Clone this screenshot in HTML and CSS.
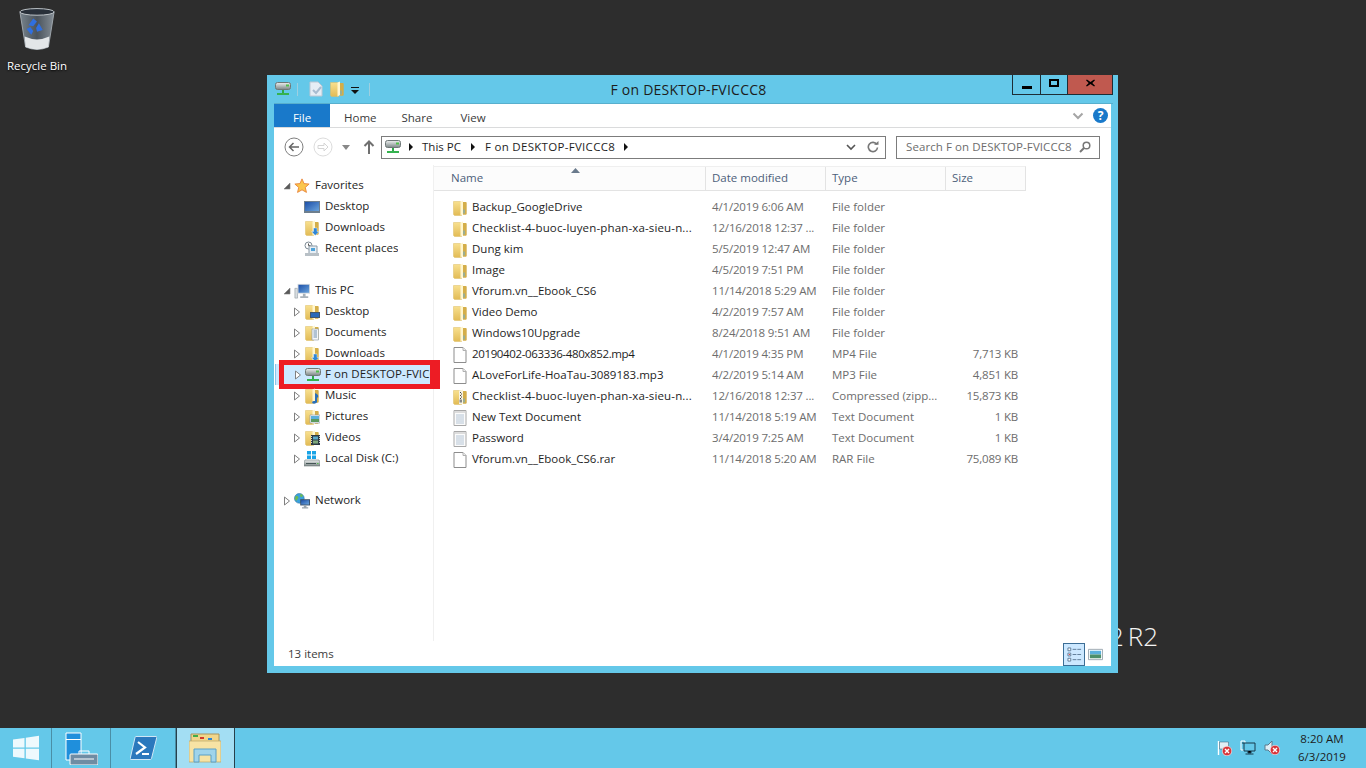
FILE: index.html
```html
<!DOCTYPE html>
<html lang="en">
<head>
<meta charset="utf-8">
<title>F on DESKTOP-FVICCC8</title>
<link rel="stylesheet" href="styles.css">
</head>
<body>
<svg class="sprite" aria-hidden="true">
  <defs>
    <linearGradient id="g-folder" x1="0" y1="0" x2="0" y2="1"><stop offset="0" stop-color="#f8e08f"/><stop offset="1" stop-color="#e2bb55"/></linearGradient>
    <linearGradient id="g-drive" x1="0" y1="0" x2="0" y2="1"><stop offset="0" stop-color="#eef0f0"/><stop offset=".5" stop-color="#b5bcbc"/><stop offset="1" stop-color="#7d8787"/></linearGradient>
    <linearGradient id="g-screen" x1="0" y1="0" x2="1" y2="1"><stop offset="0" stop-color="#1d4fa8"/><stop offset="1" stop-color="#6aa4dc"/></linearGradient>
    <linearGradient id="g-bin" x1="0" y1="0" x2="1" y2="0"><stop offset="0" stop-color="#77838c"/><stop offset=".5" stop-color="#4a535c"/><stop offset="1" stop-color="#848d95"/></linearGradient>
    <symbol id="i-folder" viewBox="0 0 16 16">
      <path d="M1.500 1.500h7l1 1v13h-7l-1-1z" fill="url(#g-folder)" stroke="#dcbc62" stroke-width=".5"/>
      <path d="M8.500 1.500l2.500-1v13.500l-2.500 1.500z" fill="#fff6cf"/>
      <path d="M11 2h3l.7.7V14l-.7.7h-3z" fill="#d4ae49"/>
      <path d="M11.500 9.500h1v4h-1z" fill="#62aede"/>
    </symbol>
    <symbol id="i-file" viewBox="0 0 16 16">
      <path d="M2 .5h9l3 3v12H2z" fill="#fff" stroke="#8d8d8d"/>
      <path d="M11 .5v3h3" fill="#eee" stroke="#b0b0b0"/>
    </symbol>
    <symbol id="i-text" viewBox="0 0 16 16">
      <path d="M2 .5h12v15H2z" fill="#fbfbfb" stroke="#a8a8a8"/>
      <path d="M3 1h10v2H3z" fill="#dcdcdc"/>
      <path d="M4 5h8M4 7h8M4 9h8M4 11h8M4 13h8" stroke="#b4c4d4"/>
    </symbol>
    <symbol id="i-zip" viewBox="0 0 16 16">
      <use href="#i-folder"/>
      <path d="M7 1.500h3.500v13.500H7z" fill="#f7f3e3"/>
      <path d="M8 3h1v1H8zM9 4.500h1v1H9zM8 6h1v1H8zM9 7.500h1v1H9zM8 9h1v1H8z" fill="#444"/>
      <path d="M7.500 10.500h2.500v3H7.500z" fill="#888"/>
    </symbol>
    <symbol id="i-drive" viewBox="0 0 16 16">
      <rect x=".5" y="1.500" width="15" height="7" rx="2" fill="url(#g-drive)" stroke="#6f7878"/>
      <path d="M11 3.500h3v2h-3z" fill="#4fbf4a"/>
      <path d="M7 9h2v3H7z" fill="#2fa84a"/>
      <path d="M2 12h12v2H2z" fill="#35b24f"/>
    </symbol>
    <symbol id="i-star" viewBox="0 0 18 18">
      <path d="M9 1l2.300 5.300 5.700.5-4.300 3.800 1.300 5.600L9 13.300l-5 2.900 1.300-5.600L1 6.800l5.700-.5z" fill="#fbc64c" stroke="#e7833a"/>
    </symbol>
    <symbol id="i-desktop" viewBox="0 0 16 16">
      <path d="M0 2h16v12H0z" fill="#6e7f8e"/>
      <path d="M1 3h14v9H1z" fill="url(#g-screen)"/>
    </symbol>
    <symbol id="i-down" viewBox="0 0 16 16">
      <use href="#i-folder"/>
      <path d="M9.500 8h3.500v3.500H15L11.200 15.500 7.500 11.500h2z" fill="#2f86d6" stroke="#fff" stroke-width=".4"/>
    </symbol>
    <symbol id="i-recent" viewBox="0 0 16 16">
      <circle cx="4.500" cy="4.500" r="3.500" fill="#fff" stroke="#7d8a94"/>
      <path d="M4.500 2.500v2h2" fill="none" stroke="#555"/>
      <path d="M5 5h8v8H5z" fill="#e6eef5" stroke="#8c9aa6"/>
      <path d="M7 7h4v3H7z" fill="#4fa3d9"/>
      <path d="M1 12h14v3H1z" fill="#b8c0c6"/>
    </symbol>
    <symbol id="i-pc" viewBox="0 0 18 18">
      <path d="M1 6h3v11H1z" fill="#d8dde0" stroke="#8a9298" stroke-width=".6"/>
      <path d="M4 1h14v11H4z" fill="#d4dadf"/>
      <path d="M5 2h12v9H5z" fill="url(#g-screen)"/>
      <path d="M10 12h3v3h-3zM7 15h9v2H7z" fill="#a9b2b9"/>
    </symbol>
    <symbol id="i-fdesk" viewBox="0 0 16 16">
      <use href="#i-folder"/>
      <path d="M6 8h10v6H6z" fill="#44586a"/>
      <path d="M7 9h8v4H7z" fill="#2a69b8"/>
    </symbol>
    <symbol id="i-fdocs" viewBox="0 0 16 16">
      <use href="#i-folder"/>
      <path d="M8 4h6.500v11H8z" fill="#f4f6f8" stroke="#8c98a4" stroke-width=".6"/>
      <path d="M9.500 6h3.500M9.500 8h3.500M9.500 10h3.500M9.500 12h3.500" stroke="#6f8faf"/>
    </symbol>
    <symbol id="i-fmusic" viewBox="0 0 16 16">
      <use href="#i-folder"/>
      <path d="M11 5c2 1 4 2 3 5l-1-1v5c0 1-2 2-4 1.500-1.500-.5-1-2.500 1-2.500h1V5z" fill="#2a6fb8"/>
    </symbol>
    <symbol id="i-fpics" viewBox="0 0 16 16">
      <use href="#i-folder"/>
      <path d="M6 6h10v8H6z" fill="#f0f3f5" stroke="#8c98a4" stroke-width=".6"/>
      <path d="M7 7h8v3H7z" fill="#5bb0dc"/>
      <path d="M7 10h8v3H7z" fill="#5a9a5e"/>
    </symbol>
    <symbol id="i-fvideo" viewBox="0 0 16 16">
      <use href="#i-folder"/>
      <path d="M7 5h9v10H7z" fill="#2d3a44"/>
      <path d="M9 6.500h5v3H9z" fill="#5aa9c9"/>
      <path d="M9 10.500h5v3H9z" fill="#7ea87a"/>
      <path d="M7.500 6v8M15.500 6v8" stroke="#cfd6da" stroke-dasharray="1 1"/>
    </symbol>
    <symbol id="i-disk" viewBox="0 0 16 16">
      <path d="M3 0h4v3.500H3zM8 0h4v3.500H8zM3 4.500h4V8H3zM8 4.500h4V8H8z" fill="#19a3e6"/>
      <path d="M1 9h14l1 2v4H0v-4z" fill="url(#g-drive)" stroke="#6f7878" stroke-width=".6"/>
      <path d="M2 12h10v1H2z" fill="#455"/>
      <path d="M13 12h1.500v1H13z" fill="#4fbf4a"/>
    </symbol>
    <symbol id="i-net" viewBox="0 0 18 18">
      <circle cx="6" cy="6" r="5.500" fill="#3aa0dc" stroke="#2a6d9e" stroke-width=".6"/>
      <path d="M2 3c2 0 3 1 3 2S3 7 3 9L1 7zM7 1c2 0 3 1 3 2S8 5 7 4z" fill="#6dbb52"/>
      <path d="M7 7h11v7H7z" fill="#3a4f66"/>
      <path d="M8 8h9v5H8z" fill="url(#g-screen)"/>
      <path d="M11 14h3v2h-3zM9 16h7v1.500H9z" fill="#9aa4ac"/>
    </symbol>
    <symbol id="i-open" viewBox="0 0 8 10"><path d="M1.500 1l5 4-5 4z" fill="#fff" stroke="#808080"/></symbol>
    <symbol id="i-shut" viewBox="0 0 8 8"><path d="M7 1v6H1z" fill="#595959" stroke="#808080" stroke-width=".6"/></symbol>
    <symbol id="i-crumb" viewBox="0 0 6 10"><path d="M1 1l4 4-4 4z" fill="#111"/></symbol>
    <symbol id="i-x" viewBox="0 0 10 10"><circle cx="5" cy="5" r="4.800" fill="#d8353a" stroke="#fff" stroke-width=".6"/><path d="M3 3l4 4M7 3l-4 4" stroke="#fff" stroke-width="1.400"/></symbol>
  </defs>
</svg>

<main class="desktop">
  <div class="watermark">Windows Server 2012 R2</div>

  <div class="desk-icon">
    <svg class="bin" viewBox="0 0 40 46">
      <path d="M2 5l6 37q12 5 24 0l6-37z" fill="url(#g-bin)" stroke="#a0a8ae"/>
      <path d="M7 31q13 6 26 0l-1 11q-12 5-24 0z" fill="#e3e6e8"/>
      <path d="M11 19l5-7 4 3-4 5zM22 17l4 7-6 2-1-4zM9 23l5 6 2-4-3-4z" fill="#2f6fe0"/>
      <ellipse cx="20" cy="5" rx="18" ry="3.500" fill="#28303a" stroke="#c3c9ce"/>
    </svg>
    <span class="desk-label">Recycle Bin</span>
  </div>

  <section class="window">
    <header class="titlebar">
      <div class="quick">
        <svg class="ic16"><use href="#i-drive"/></svg>
        <span class="qsep"></span>
        <svg class="ic16 qdoc" viewBox="0 0 16 16"><path d="M2 1h8l4 4v10H2z" fill="#e6edf5" stroke="#bcc7d3"/><path d="M5 9l3 3 5-6" fill="none" stroke="#a9bcd0" stroke-width="2"/></svg>
        <svg class="ic16 qfolder"><use href="#i-folder"/></svg>
        <svg class="qcaret" viewBox="0 0 8 7"><path d="M0 0h8v1H0z" fill="#111"/><path d="M0 3h8L4 7z" fill="#111"/></svg>
        <span class="qsep qsep-end"></span>
      </div>
      <h1 class="title">F on DESKTOP-FVICCC8</h1>
      <div class="winbtns">
        <button class="wb wb-min" aria-label="Minimize"><span class="g-min"></span></button>
        <button class="wb wb-max" aria-label="Maximize"><span class="g-max"></span></button>
        <button class="wb wb-close" aria-label="Close"><svg class="g-x" viewBox="0 0 10 8"><path d="M1 0l4 3 4-3 1 1-3 3 3 3-1 1-4-3-4 3-1-1 3-3-3-3z" fill="#000"/></svg></button>
      </div>
    </header>

    <div class="body">
      <nav class="tabs">
        <span class="tab tab-file">File</span>
        <span class="tab tab-home">Home</span>
        <span class="tab tab-share">Share</span>
        <span class="tab tab-view">View</span>
        <span class="tabs-right">
          <svg class="chev" viewBox="0 0 12 8"><path d="M1.500 1.500L6 6l4.500-4.500" fill="none" stroke="#a5a5a5" stroke-width="2"/></svg>
          <svg class="help" viewBox="0 0 15 15"><circle cx="7.500" cy="7.500" r="7.500" fill="#1979ca"/><text x="7.500" y="12" class="help-q">?</text></svg>
        </span>
      </nav>

      <div class="addr-row">
        <svg class="back" viewBox="0 0 20 20"><circle cx="10" cy="10" r="9" fill="#fff" stroke="#7f7f7f"/><path d="M15 10H6M9.500 6L5.500 10l4 4" fill="none" stroke="#666" stroke-width="1.500"/></svg>
        <svg class="fwd" viewBox="0 0 20 20"><circle cx="10" cy="10" r="9" fill="#fff" stroke="#dcdcdc"/><path d="M5 8.500h6V6l4 4-4 4v-2.500H5z" fill="#fff" stroke="#d5d5d5"/></svg>
        <svg class="recent-caret" viewBox="0 0 8 5"><path d="M0 0h8L4 5z" fill="#888"/></svg>
        <svg class="up" viewBox="0 0 12 14"><path d="M6 1v13M1.500 6L6 1.500 10.500 6" fill="none" stroke="#707070" stroke-width="2"/></svg>
        <div class="addr">
          <svg class="ic16"><use href="#i-drive"/></svg>
          <svg class="crumb first"><use href="#i-crumb"/></svg>
          <span class="crumb-text">This PC</span>
          <svg class="crumb crumb-wide"><use href="#i-crumb"/></svg>
          <span class="crumb-text crumb-drive">F on DESKTOP-FVICCC8</span>
          <svg class="crumb"><use href="#i-crumb"/></svg>
          <span class="addr-right">
            <svg class="addr-chev" viewBox="0 0 10 7"><path d="M1 1l4 4 4-4" fill="none" stroke="#555" stroke-width="1.600"/></svg>
            <svg class="refresh" viewBox="0 0 12 12"><path d="M9.800 3.500A4.600 4.600 0 1 0 10.500 6.500" fill="none" stroke="#777" stroke-width="1.600"/><path d="M7 3.800h4.500V0z" fill="#777"/></svg>
          </span>
        </div>
        <div class="search">
          <span class="search-text">Search F on DESKTOP-FVICCC8</span>
          <svg class="loupe" viewBox="0 0 12 12"><circle cx="7.500" cy="4.500" r="3.300" fill="none" stroke="#777" stroke-width="1.500"/><path d="M5 7L1 11" stroke="#777" stroke-width="2"/></svg>
        </div>
      </div>

      <div class="panes">
        <aside class="tree">
          <div class="group">
            <div class="node"><svg class="tw tw-shut"><use href="#i-shut"/></svg><svg class="ic16 ic-root"><use href="#i-star"/></svg><span class="lbl">Favorites</span></div>
            <div class="node leaf"><svg class="ic16"><use href="#i-desktop"/></svg><span class="lbl">Desktop</span></div>
            <div class="node leaf"><svg class="ic16"><use href="#i-down"/></svg><span class="lbl">Downloads</span></div>
            <div class="node leaf"><svg class="ic16"><use href="#i-recent"/></svg><span class="lbl">Recent places</span></div>
          </div>
          <div class="group">
            <div class="node"><svg class="tw tw-shut"><use href="#i-shut"/></svg><svg class="ic16 ic-root"><use href="#i-pc"/></svg><span class="lbl">This PC</span></div>
            <div class="node child"><svg class="tw"><use href="#i-open"/></svg><svg class="ic16"><use href="#i-fdesk"/></svg><span class="lbl">Desktop</span></div>
            <div class="node child"><svg class="tw"><use href="#i-open"/></svg><svg class="ic16"><use href="#i-fdocs"/></svg><span class="lbl">Documents</span></div>
            <div class="node child"><svg class="tw"><use href="#i-open"/></svg><svg class="ic16"><use href="#i-down"/></svg><span class="lbl">Downloads</span></div>
            <div class="node child selected"><svg class="tw"><use href="#i-open"/></svg><svg class="ic16"><use href="#i-drive"/></svg><span class="lbl">F on DESKTOP-FVICCC8</span></div>
            <div class="node child"><svg class="tw"><use href="#i-open"/></svg><svg class="ic16"><use href="#i-fmusic"/></svg><span class="lbl">Music</span></div>
            <div class="node child"><svg class="tw"><use href="#i-open"/></svg><svg class="ic16"><use href="#i-fpics"/></svg><span class="lbl">Pictures</span></div>
            <div class="node child"><svg class="tw"><use href="#i-open"/></svg><svg class="ic16"><use href="#i-fvideo"/></svg><span class="lbl">Videos</span></div>
            <div class="node child"><svg class="tw"><use href="#i-open"/></svg><svg class="ic16"><use href="#i-disk"/></svg><span class="lbl">Local Disk (C:)</span></div>
          </div>
          <div class="group">
            <div class="node"><svg class="tw"><use href="#i-open"/></svg><svg class="ic16 ic-root"><use href="#i-net"/></svg><span class="lbl">Network</span></div>
          </div>
        </aside>

        <div class="files">
          <div class="row head">
            <span class="col-name">Name<svg class="sort" viewBox="0 0 9 5"><path d="M0 5h9L4.500 0z" fill="#6a7a8c"/></svg></span>
            <span class="col-date">Date modified</span>
            <span class="col-type">Type</span>
            <span class="col-size">Size</span>
          </div>
          <div class="rows">
            <div class="row"><span class="col-name"><svg class="ic16"><use href="#i-folder"/></svg><span class="fname">Backup_GoogleDrive</span></span><span class="col-date">4/1/2019 6:06 AM</span><span class="col-type">File folder</span><span class="col-size"></span></div>
            <div class="row"><span class="col-name"><svg class="ic16"><use href="#i-folder"/></svg><span class="fname wide">Checklist-4-buoc-luyen-phan-xa-sieu-n...</span></span><span class="col-date">12/16/2018 12:37 ...</span><span class="col-type">File folder</span><span class="col-size"></span></div>
            <div class="row"><span class="col-name"><svg class="ic16"><use href="#i-folder"/></svg><span class="fname">Dung kim</span></span><span class="col-date">5/5/2019 12:47 AM</span><span class="col-type">File folder</span><span class="col-size"></span></div>
            <div class="row"><span class="col-name"><svg class="ic16"><use href="#i-folder"/></svg><span class="fname">Image</span></span><span class="col-date">4/5/2019 7:51 PM</span><span class="col-type">File folder</span><span class="col-size"></span></div>
            <div class="row"><span class="col-name"><svg class="ic16"><use href="#i-folder"/></svg><span class="fname">Vforum.vn__Ebook_CS6</span></span><span class="col-date">11/14/2018 5:29 AM</span><span class="col-type">File folder</span><span class="col-size"></span></div>
            <div class="row"><span class="col-name"><svg class="ic16"><use href="#i-folder"/></svg><span class="fname">Video Demo</span></span><span class="col-date">4/2/2019 7:57 AM</span><span class="col-type">File folder</span><span class="col-size"></span></div>
            <div class="row"><span class="col-name"><svg class="ic16"><use href="#i-folder"/></svg><span class="fname">Windows10Upgrade</span></span><span class="col-date">8/24/2018 9:51 AM</span><span class="col-type">File folder</span><span class="col-size"></span></div>
            <div class="row"><span class="col-name"><svg class="ic16"><use href="#i-file"/></svg><span class="fname narrow">20190402-063336-480x852.mp4</span></span><span class="col-date">4/1/2019 4:35 PM</span><span class="col-type">MP4 File</span><span class="col-size">7,713 KB</span></div>
            <div class="row"><span class="col-name"><svg class="ic16"><use href="#i-file"/></svg><span class="fname">ALoveForLife-HoaTau-3089183.mp3</span></span><span class="col-date">4/2/2019 5:14 AM</span><span class="col-type">MP3 File</span><span class="col-size">4,851 KB</span></div>
            <div class="row"><span class="col-name"><svg class="ic16"><use href="#i-zip"/></svg><span class="fname wide">Checklist-4-buoc-luyen-phan-xa-sieu-n...</span></span><span class="col-date">12/16/2018 12:37 ...</span><span class="col-type">Compressed (zipp...</span><span class="col-size">15,873 KB</span></div>
            <div class="row"><span class="col-name"><svg class="ic16"><use href="#i-text"/></svg><span class="fname">New Text Document</span></span><span class="col-date">11/14/2018 5:19 AM</span><span class="col-type">Text Document</span><span class="col-size">1 KB</span></div>
            <div class="row"><span class="col-name"><svg class="ic16"><use href="#i-text"/></svg><span class="fname">Password</span></span><span class="col-date">3/4/2019 7:25 AM</span><span class="col-type">Text Document</span><span class="col-size">1 KB</span></div>
            <div class="row"><span class="col-name"><svg class="ic16"><use href="#i-file"/></svg><span class="fname">Vforum.vn__Ebook_CS6.rar</span></span><span class="col-date">11/14/2018 5:20 AM</span><span class="col-type">RAR File</span><span class="col-size">75,089 KB</span></div>
          </div>
        </div>
      </div>

      <footer class="status">
        <span class="count">13 items</span>
        <span class="views">
          <span class="view view-on">
            <svg class="view-ic" viewBox="0 0 16 16"><path d="M1 1h3v3H1zM1 6.500h3v3H1zM1 12h3v3H1z" fill="#fff" stroke="#5c7a96"/><path d="M2 7.500h1v1H2z" fill="#d23"/><path d="M6 2.500h4M11 2.500h4M6 8h4M11 8h4M6 13.500h4M11 13.500h4" stroke="#5c7a96"/></svg>
          </span>
          <span class="view view-off">
            <svg class="view-ic" viewBox="0 0 16 16"><path d="M.5 2.500h15v11H.5z" fill="#fff" stroke="#9aa6b0"/><path d="M2 4h12v4H2z" fill="#5bb0dc"/><path d="M2 8h12v4H2z" fill="#4d8f6a"/></svg>
          </span>
        </span>
      </footer>
    </div>
  </section>
</main>

<footer class="taskbar">
  <button class="task task-start" aria-label="Start">
    <svg class="t-win" viewBox="0 0 26 26"><path d="M0 4.500l11.500-1.600v9.600H0zM12.800 2.700L26 .8v11.700H12.800zM0 13.800h11.500v9.500L0 21.700zM12.800 13.800H26v11.400l-13.200-1.800z" fill="#eef9fd"/></svg>
  </button>
  <button class="task task-sm" aria-label="Server Manager">
    <svg class="t-sm" viewBox="0 0 33 33"><path d="M1 1h15v27H1z" fill="#1f8fdc" stroke="#fff"/><path d="M1 7.500h15" stroke="#fff"/><path d="M6 22h26q1 0 1 1v9q0 1-1 1H6q-1 0-1-1v-9q0-1 1-1z" fill="#6f8ca3" stroke="#fff"/><path d="M14 22v-3h10v3" fill="none" stroke="#fff"/><path d="M9 27h20" stroke="#fff"/></svg>
  </button>
  <button class="task task-ps" aria-label="PowerShell">
    <svg class="t-ps" viewBox="0 0 27 24"><path d="M6 .5h20q1 0 .8 1L21.500 22.500q-.3 1-1.300 1H1q-1 0-.8-1L5 1.500Q5.200.5 6 .5z" fill="#2b78bd" stroke="#cfe6f5"/><path d="M8 6l7 5.500L6 18" fill="none" stroke="#fff" stroke-width="2.200"/><path d="M12 18h7" stroke="#fff" stroke-width="2"/></svg>
  </button>
  <button class="task task-ex active" aria-label="File Explorer">
    <svg class="t-ex" viewBox="0 0 32 30"><path d="M2 1h28v10H2z" fill="#f1d68a" stroke="#a8945c"/><path d="M4 2h5v2H4z" fill="#3fae49"/><path d="M11 4h4v2h-4z" fill="#d23a2e"/><path d="M19 5h4v2h-4z" fill="#2d86d6"/><path d="M0 8h32v21H0z" fill="#f7e3a4" stroke="#b8a368" stroke-width=".7"/><path d="M5 16h22v13h-5v-7H10v7H5z" fill="#9fd4ec" stroke="#5aa0c6"/></svg>
  </button>
  <div class="tray">
    <svg class="tray-ic" viewBox="0 0 16 16"><path d="M2.500 1v14" stroke="#fff" stroke-width="1.400"/><path d="M3.500 2h9v7h-9z" fill="#dfeef6" stroke="#3a5a70" stroke-width=".5"/><use href="#i-x" x="6" y="6" width="10" height="10"/></svg>
    <svg class="tray-ic" viewBox="0 0 16 16"><path d="M1 1h4v9H1z" fill="none" stroke="#fff"/><path d="M4 3h11v8H4z" fill="#64c8e9" stroke="#17384a"/><path d="M8 11v2h3v-2M5.500 14h8" stroke="#17384a"/><path d="M2 3h2" stroke="#17384a"/></svg>
    <svg class="tray-ic" viewBox="0 0 16 16"><path d="M1 5h3l4-4v13L4 10H1z" fill="#dfeef6" stroke="#5c7a8c"/><use href="#i-x" x="6" y="5" width="10" height="10"/></svg>
    <div class="clock"><span>8:20 AM</span><span>6/3/2019</span></div>
  </div>
</footer>
</body>
</html>
```

FILE: styles.css
```css
* { box-sizing: border-box; }
html, body { height: 100%; }
body {
  margin: 0;
  display: flex;
  flex-direction: column;
  background: #2d2d2d;
  color: #1e1e1e;
  font: 11.5px/16px "Open Sans", "Noto Sans", sans-serif;
  overflow: hidden;
}
svg { display: block; flex: none; }
button { border: 0; margin: 0; padding: 0; background: none; font: inherit; }
.sprite { position: absolute; width: 0; height: 0; }

.desktop { position: relative; flex: 1; }
.watermark {
  position: absolute;
  right: 208px;
  top: 618px;
  color: #f4f4f4;
  font-size: 26px;
  line-height: 36px;
  font-weight: 300;
  word-spacing: -3px;
  white-space: nowrap;
}
.desk-icon {
  position: absolute;
  left: 0;
  top: 6px;
  width: 74px;
  display: flex;
  flex-direction: column;
  align-items: center;
  color: #fff;
}
.bin { width: 38px; height: 46px; }
.desk-label { margin-top: 6px; text-shadow: 0 1px 2px #000; }

.window {
  position: absolute;
  left: 267px;
  top: 75px;
  width: 851px;
  height: 598px;
  padding: 0 7px 7px;
  background: #64c8e9;
  display: flex;
  flex-direction: column;
}
.titlebar {
  height: 29px;
  flex: none;
  display: grid;
  grid-template-columns: 1fr auto 1fr;
  margin-right: -2px;
  border-bottom: 1px solid #58afcd;
}
.quick { display: flex; align-items: center; height: 28px; margin-left: 1px; }
.ic16 { width: 16px; height: 16px; }
.qsep { width: 1px; height: 13px; background: #9ecfe0; margin-left: 6px; }
.qdoc { margin-left: 10px; }
.qfolder { margin-left: 5px; }
.qcaret { width: 8px; height: 7px; margin-left: 6px; margin-top: 2px; }
.qsep-end { margin-left: 10px; }
.title {
  margin: 0 0 0 -10px;
  font-size: 14px;
  line-height: 30px;
  font-weight: 400;
  color: #1c1c1c;
  letter-spacing: .25px;
  white-space: nowrap;
}
.winbtns { justify-self: end; display: flex; height: 20px; }
.wb {
  height: 20px;
  border: 1px solid #1d2d35;
  border-top: 0;
  display: flex;
  align-items: center;
  justify-content: center;
}
.wb-min { width: 28px; border-right: 0; }
.wb-max { width: 27px; border-right: 0; }
.wb-close { width: 46px; background: #c0594f; }
.g-min { width: 10px; height: 3px; background: #000; margin-top: 5px; }
.g-max { width: 10px; height: 8px; border: 2px solid #000; margin-top: -3px; }
.g-x { width: 9px; height: 8px; margin-top: -3px; }

.body { flex: 1; min-height: 0; background: #fff; display: flex; flex-direction: column; }

.tabs {
  flex: none;
  height: 24px;
  display: flex;
  align-items: flex-start;
  border-bottom: 1px solid #dadbdc;
  color: #3a3a3a;
}
.tab { display: block; height: 23px; padding-top: 4px; line-height: 19px; }
.tab-file { width: 56px; background: #1979ca; color: #fff; text-align: center; }
.tab-home { margin-left: 14px; }
.tab-share { margin-left: 25px; }
.tab-view { margin-left: 28px; }
.tabs-right { margin-left: auto; height: 23px; display: flex; align-items: center; padding-right: 3px; }
.chev { width: 12px; height: 8px; margin-right: 9px; }
.help { width: 15px; height: 15px; }
.help-q { font: 700 12px "Open Sans", sans-serif; fill: #fff; text-anchor: middle; }

.addr-row { flex: none; height: 37px; display: flex; align-items: center; padding-top: 1px; }
.back { width: 20px; height: 20px; margin-left: 10px; }
.fwd { width: 20px; height: 20px; margin-left: 9px; }
.recent-caret { width: 8px; height: 5px; margin-left: 9px; }
.up { width: 12px; height: 14px; margin-left: 13px; }
.addr {
  width: 505px;
  height: 23px;
  margin-left: 6px;
  border: 1px solid #7c7c7c;
  display: flex;
  align-items: center;
  padding-left: 3px;
  color: #1e1e1e;
}
.crumb { width: 6px; height: 10px; margin: 0 8px; }
.crumb.first { margin-left: 7px; }
.crumb.crumb-wide { margin-left: 9px; margin-right: 9px; }
.crumb-drive { letter-spacing: .3px; }
.addr-right { margin-left: auto; display: flex; align-items: center; padding-right: 6px; }
.addr-chev { width: 10px; height: 7px; margin-right: 11px; }
.refresh { width: 12px; height: 12px; }
.search {
  width: 204px;
  height: 23px;
  margin-left: 10px;
  border: 1px solid #7c7c7c;
  display: flex;
  align-items: center;
  justify-content: space-between;
  padding: 0 8px 0 9px;
  color: #6d6d6d;
}
.search-text { white-space: nowrap; letter-spacing: .08px; }
.loupe { width: 12px; height: 12px; }

.panes { flex: 1; min-height: 0; display: flex; }
.tree {
  width: 160px;
  flex: none;
  height: 476px;
  padding-top: 10px;
  border-right: 1px solid #f0f0f0;
  position: relative;
}
.group { margin-bottom: 21px; }
.node {
  position: relative;
  display: flex;
  align-items: center;
  height: 21px;
  padding-left: 9px;
  color: #1e1e1e;
}
.node.child { padding-left: 19px; }
.node.leaf { padding-left: 30px; }
.tw { width: 8px; height: 10px; margin-right: 3px; }
.tw-shut { height: 8px; }
.lbl { margin-left: 5px; padding-bottom: 2px; white-space: nowrap; overflow: hidden; }
.selected { margin-left: 1px; padding-left: 18px; background: #cce8ff; box-shadow: inset 1px 0 0 #8fc4e8; margin-right: 1px; }
.selected .lbl { margin-left: 4px; letter-spacing: .08px; }
.selected::after {
  content: "";
  position: absolute;
  left: 4px;
  right: -8px;
  top: -4px;
  bottom: -4px;
  border: 5px solid #ed1c24;
  border-right-width: 10px;
}

.files { flex: 1; min-width: 0; padding-top: 1px; }
.row {
  display: grid;
  grid-template-columns: 271px 120px 120px 80px;
  height: 21px;
  align-items: center;
  color: #6d6d6d;
  white-space: nowrap;
}
.head {
  height: 25px;
  background: #fcfcfc;
  color: #4c607a;
  border-top: 1px solid #efefef;
  border-bottom: 1px solid #e3e3e3;
  border-right: 1px solid #e3e3e3;
  width: 592px;
  margin-bottom: 6px;
}
.head > span { height: 100%; line-height: 21px; border-left: 1px solid #e3e3e3; }
.head > span:first-child { border-left: 0; padding-left: 17px; position: relative; }
.head .col-date, .head .col-type, .head .col-size { padding-left: 6px; text-align: left; }
.sort { position: absolute; left: 137px; top: 1px; width: 9px; height: 5px; }
.rows .col-name { display: flex; align-items: center; padding-left: 18px; color: #1e1e1e; }
.fname { margin-left: 4px; padding-bottom: 2px; }
.wide { letter-spacing: .15px; }
.narrow { letter-spacing: -.36px; }
.rows .col-date, .rows .col-type, .rows .col-size { padding-bottom: 2px; }
.rows .col-date { padding-left: 7px; letter-spacing: -.16px; }
.rows .col-type { padding-left: 7px; }
.rows .col-size { text-align: right; padding-right: 7px; letter-spacing: -.2px; }

.status {
  flex: none;
  height: 25px;
  margin-top: -1px;
  display: flex;
  align-items: flex-end;
  justify-content: space-between;
  padding: 0 8px 0 14px;
  color: #3c3c3c;
}
.count { padding-bottom: 4px; }
.views { display: flex; align-items: center; gap: 3px; }
.view { height: 23px; display: flex; align-items: center; justify-content: center; }
.view-on { width: 22px; background: #cce8ff; border: 1px solid #3c6e96; }
.view-off { width: 15px; }
.view-ic { width: 15px; height: 15px; }

.taskbar {
  flex: none;
  height: 40px;
  display: flex;
  background: #64c8e9;
  color: #1c1c1c;
}
.task { height: 40px; display: flex; align-items: center; justify-content: center; border-right: 1px solid #4a8ea6; }
.task-start { width: 52px; }
.task-sm { width: 59px; }
.task-ps { width: 65px; }
.task-ex { width: 59px; background: #a3def3; border-right: 1px solid #27404b; box-shadow: inset 1px 0 0 #27404b; }
.t-win { width: 26px; height: 26px; }
.t-sm { width: 33px; height: 33px; margin-left: 1px; }
.t-ps { width: 27px; height: 24px; }
.t-ex { width: 32px; height: 30px; }
.tray { margin-left: auto; display: flex; align-items: center; padding-right: 13px; }
.tray-ic { width: 16px; height: 16px; margin-right: 8px; }
.clock { margin-left: 3px; display: flex; flex-direction: column; align-items: center; line-height: 18px; width: 62px; }
```
